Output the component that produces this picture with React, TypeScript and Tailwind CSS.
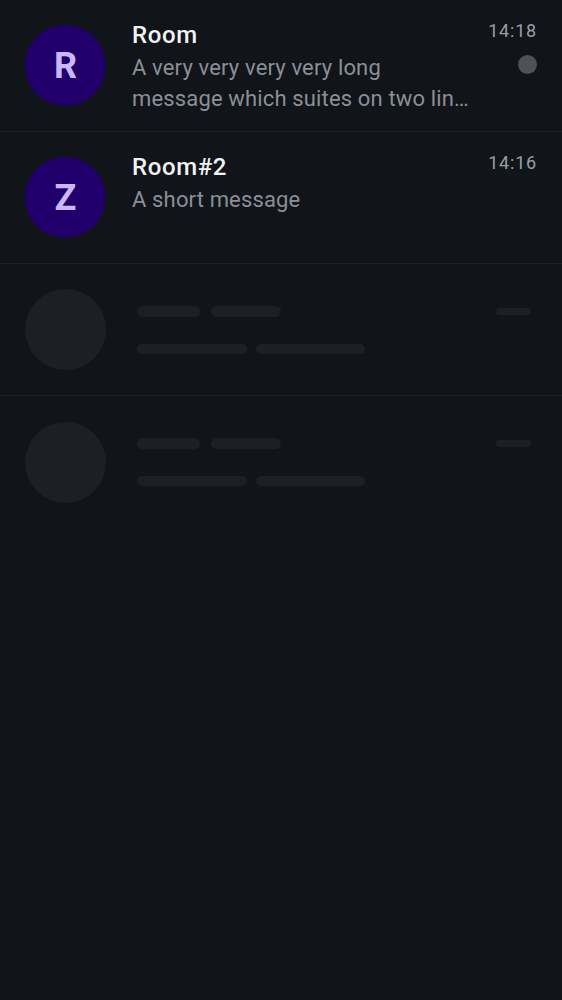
import React from "react";

const font = { fontFamily: "Roboto, 'Noto Sans', sans-serif" };

function RoomRow({
  letter,
  title,
  lines,
  time,
  unread,
}: {
  letter: string;
  title: string;
  lines: string[];
  time: string;
  unread?: boolean;
}) {
  return (
    <div className="flex h-[132px] border-b border-[#202329] pl-[25px] pr-[25px]">
      <div className="flex items-center">
        <div className="flex h-[81px] w-[81px] items-center justify-center rounded-full bg-[#21006b] text-[36px] font-bold text-[#c9b8ff]">
          {letter}
        </div>
      </div>
      <div className="ml-[26px] flex min-w-0 flex-1 flex-col pt-[21px]">
        <div className="text-[24px] leading-[28px] font-medium tracking-[0.6px] text-[#f1f2f4]">
          {title}
        </div>
        <div className="mt-[3px] w-[344px] text-[22px] leading-[31px] tracking-[0.15px] text-[#8a8f98]">
          {lines.map((l, i) => (
            <div key={i} className="truncate">
              {l}
            </div>
          ))}
        </div>
      </div>
      <div className="flex flex-col items-end pt-[19px]">
        <div className="text-[18px] leading-[24px] tracking-[0.8px] text-[#9a9fa7]">{time}</div>
        {unread && <div className="mt-[12px] h-[19px] w-[19px] rounded-full bg-[#4d5158]" />}
      </div>
    </div>
  );
}

function SkeletonRow({ border }: { border?: boolean }) {
  return (
    <div
      className={
        "flex h-[132px] pl-[25px] pr-[31px] " + (border ? "border-b border-[#202329]" : "")
      }
    >
      <div className="flex items-center">
        <div className="h-[81px] w-[81px] rounded-full bg-[#1e1f24]" />
      </div>
      <div className="ml-[31px] flex flex-1 flex-col pt-[42px]">
        <div className="flex gap-[11px]">
          <div className="h-[11px] w-[63px] rounded-full bg-[#1e1f24]" />
          <div className="h-[11px] w-[70px] rounded-full bg-[#1e1f24]" />
        </div>
        <div className="mt-[27px] flex gap-[9px]">
          <div className="h-[10px] w-[110px] rounded-full bg-[#1e1f24]" />
          <div className="h-[10px] w-[109px] rounded-full bg-[#1e1f24]" />
        </div>
      </div>
      <div className="pt-[44px]">
        <div className="h-[7px] w-[35px] rounded-full bg-[#1e1f24]" />
      </div>
    </div>
  );
}

export default function App() {
  return (
    <div className="min-h-screen bg-[#111418]" style={font}>
      <RoomRow
        letter="R"
        title="Room"
        lines={["A very very very very long", "message which suites on two lines but not more"]}
        time="14:18"
        unread
      />
      <RoomRow letter="Z" title="Room#2" lines={["A short message"]} time="14:16" />
      <SkeletonRow border />
      <SkeletonRow />
    </div>
  );
}
